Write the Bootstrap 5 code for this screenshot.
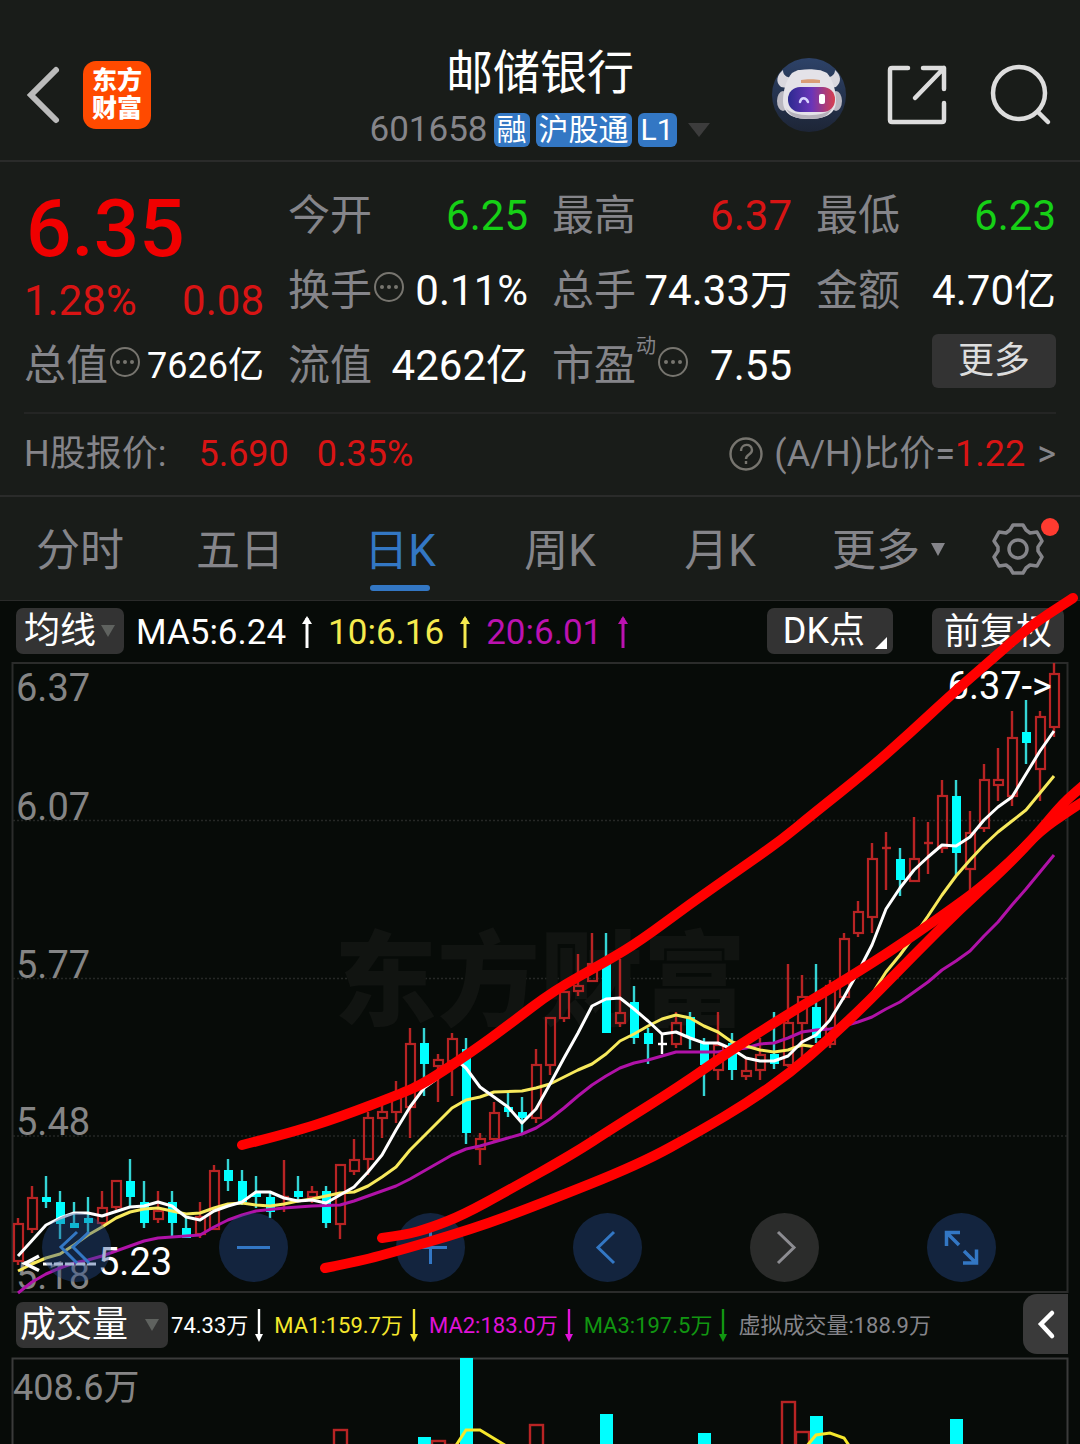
<!DOCTYPE html>
<html lang="zh-CN">
<head>
<meta charset="utf-8">
<meta name="viewport" content="width=device-width, initial-scale=1">
<title>邮储银行 601658</title>
<link href="https://cdn.jsdelivr.net/npm/bootstrap@5.3.0/dist/css/bootstrap.min.css" rel="stylesheet">
<style>
  :root { --panel:#191c19; --ink:#070b08; --mute:#85858a; --up:#d81414; --down:#16d016; --accent:#3377c4; --chip:#333333; --ma10:#f5ea4e; --ma20:#bb12b0; }
  body { background:var(--ink); color:#fff; font-family:Roboto,"Noto Sans CJK SC",sans-serif; overflow-x:hidden; }
  a { color:inherit; text-decoration:none; }
  button { border:0; background:none; color:inherit; padding:0; }
  svg { display:block; overflow:visible; }
  .panel { background:var(--panel); }
  .rule-b { border-bottom:2px solid #2a2b2a; }
  .mute { color:var(--mute); } .up { color:var(--up); } .down { color:var(--down); }
  .c10 { color:var(--ma10); } .c20 { color:var(--ma20); }

  .topbar { display:grid; grid-template-columns:1fr auto 1fr; padding:28px 28px 0 28px; height:162px; }
  .topbar-side { padding-top:28px; }
  .brand { width:68px; height:68px; margin:5px 0 0 19px; border-radius:13px; background:#ff4a00; font-size:25px; line-height:28px; font-weight:900; text-align:center; padding-top:6px; }
  .stock-name { font-size:47px; line-height:60px; font-weight:400; margin:15px 0 0; }
  .code-line { font-size:35px; line-height:40px; margin-top:7px; gap:6px; }
  .tag { background:var(--accent); border-radius:6px; font-size:30px; line-height:34px; padding:0 3px; }

  .quote { padding:16px 24px 0; }
  .quote-grid { display:grid; grid-template-columns:repeat(4,1fr); grid-auto-rows:75px; column-gap:24px; padding-bottom:9px; border-bottom:2px solid #242524; }
  .price-cell { grid-row:span 2; }
  .price { font-size:80px; line-height:90px; font-weight:500; color:#f00000; padding:6px 0 2px 2px; }
  .kv { display:flex; align-items:center; justify-content:space-between; font-size:42px; line-height:50px; white-space:nowrap; }
  .kv .small-num { font-size:36px; }
  .dyn { font-size:20px; line-height:20px; align-self:flex-start; margin-top:8px; }
  .more-btn { background:var(--chip); color:#ddd; border-radius:6px; font-size:36px; line-height:54px; width:124px; margin-top:6px; }
  .h-line { font-size:36px; line-height:40px; padding:20px 0 21px; }

  .period { display:grid; grid-template-columns:repeat(5,160fr) 178fr 102fr; height:103px; font-size:44px; padding-top:23px; }
  .period a, .period button { text-align:center; color:var(--mute); position:relative; height:71px; line-height:62px; }
  .period .current { color:var(--accent); }
  .period .current::after { content:""; position:absolute; left:50%; bottom:0; width:60px; height:6px; margin-left:-30px; border-radius:3px; background:var(--accent); }
  .caret { margin:25px 0 0 10px; }
  .gear { padding-right:22px; }

  .board { border-top:1px solid #2a2b2a; }
  .chip-btn { background:var(--chip); border-radius:7px; font-size:36px; line-height:48px; height:46px; white-space:nowrap; }
  .ma-bar { height:61px; padding:7px 16px 0; font-size:35px; line-height:49px; }
  .trend { margin:6px 10px 0; }
  .chip-gap { margin-left:39px; }
  .vol-bar { height:63px; padding:0 12px 0 16px; font-size:22px; line-height:46px; }
  .vol-text { margin:9px 0 0 3px; }
  .side-btn { background:#3a3a3a; border-radius:14px 0 0 14px; width:45px; height:60px; }
  .pane svg { width:100%; height:auto; }
  .tools { position:absolute; left:42px; right:84px; bottom:12px; }
  .tools button { width:69px; height:69px; border-radius:50%; background:rgba(37,76,146,.4); color:var(--accent); }
  .tools .off { background:#2b2c2b; color:#8d8d92; }
  .ink-layer { position:absolute; left:0; top:0; width:100%; height:auto; pointer-events:none; z-index:3; }
</style>
</head>
<body>
<header class="panel rule-b topbar">
  <div class="topbar-side d-flex align-items-start">
    <a href="#" aria-label="返回" class="pt-2"><svg width="36" height="62" viewBox="2 0 36 62"><path d="M30 6 5 31 30 56" fill="none" stroke="#bbb" stroke-width="6" stroke-linecap="round"/></svg></a>
    <div class="brand">东方<br>财富</div>
  </div>
  <div class="text-center">
    <h1 class="stock-name">邮储银行</h1>
    <div class="code-line d-flex align-items-center justify-content-center">
      <span class="mute">601658</span><span class="tag">融</span><span class="tag">沪股通</span><span class="tag">L1</span>
      <svg class="ms-1" width="24" height="16" viewBox="0 0 24 16"><path d="M1 1h22L12 15z" fill="#3c3c3c"/></svg>
    </div>
  </div>
  <div class="topbar-side d-flex align-items-start justify-content-end">
    <button aria-label="智能助手"><svg width="76" height="76" viewBox="1 0 76 76">
      <defs><linearGradient id="visor"><stop offset="0" stop-color="#2c2a90"/><stop offset=".5" stop-color="#6a35b8"/><stop offset="1" stop-color="#d8404e"/></linearGradient>
      <linearGradient id="sky" x2="0" y2="1"><stop offset="0" stop-color="#2d4268"/><stop offset="1" stop-color="#1d2536"/></linearGradient></defs>
      <circle cx="38" cy="39" r="37" fill="url(#sky)"/>
      <path d="M12 14c-6 5-8 12-2 17l12 2 3-12c-8 2-13-1-13-7zM64 14c6 5 7 12 1 17l-11 2-4-12c8 2 14-1 14-7z" fill="#d9d7de"/>
      <ellipse cx="12" cy="45" rx="6" ry="10" fill="#b9b7c0"/><ellipse cx="65" cy="45" rx="6" ry="10" fill="#b9b7c0"/>
      <path d="M21 17c3-1 4-3 8-3 6-1 13-1 18 0 4 0 6 2 9 3 6 7 9 18 9 28 0 13-11 18-27 18S12 58 12 45c0-10 3-21 9-28z" fill="#e4e2e8"/>
      <path d="M15 52c5 9 39 10 46 0-3 8-10 11-23 11s-20-3-23-11z" fill="#b5b1bb"/>
      <rect x="17" y="31" width="47" height="25" rx="12" fill="url(#visor)"/>
      <path d="M30 24c5-1 14-1 19 0v3H30z" fill="#d99d75"/>
      <path d="M29 46c1-5 6-5 8 0" fill="none" stroke="#d8d4ff" stroke-width="2.5" stroke-linecap="round"/><rect x="48" y="38" width="6" height="10" rx="2" fill="#fff"/>
    </svg></button>
    <button aria-label="分享" class="ms-4"><svg class="mt-2 ms-3" width="60" height="60" viewBox="1 -1 60 60" fill="none" stroke="#ddd" stroke-width="4.5" stroke-linecap="round" stroke-linejoin="round"><path d="M21 3H5q-2 0-2 2v50q0 2 2 2h50q2 0 2-2V38M36 3h21v21M57 3 28 33"/></svg></button>
    <button aria-label="搜索" class="ms-4"><svg class="mt-2 ms-3" width="64" height="62" viewBox="0 0 64 62" fill="none" stroke="#ddd" stroke-width="4.5" stroke-linecap="round"><circle cx="31" cy="29" r="26"/><path d="m50 48 10 10"/></svg></button>
  </div>
</header>

<section class="panel quote rule-b">
  <div class="quote-grid">
    <div class="price-cell"><div class="price">6.35</div><div class="kv up"><span>1.28%</span><span>0.08</span></div></div>
    <div class="kv"><span class="mute">今开</span><span class="down">6.25</span></div>
    <div class="kv"><span class="mute">最高</span><span class="up">6.37</span></div>
    <div class="kv"><span class="mute">最低</span><span class="down">6.23</span></div>
    <div class="kv"><span class="mute d-flex align-items-center">换手<svg width="32" height="42" viewBox="0 0 32 42"><g fill="#77756f"><circle cx="17" cy="17" r="14" fill="none" stroke="#77756f" stroke-width="2"/><circle cx="10" cy="17" r="2"/><circle cx="17" cy="17" r="2"/><circle cx="24" cy="17" r="2"/></g></svg></span><span>0.11%</span></div>
    <div class="kv"><span class="mute">总手</span><span>74.33万</span></div>
    <div class="kv"><span class="mute">金额</span><span>4.70亿</span></div>
    <div class="kv"><span class="mute d-flex align-items-center">总值<svg width="32" height="42" viewBox="0 0 32 42"><g fill="#77756f"><circle cx="17" cy="17" r="14" fill="none" stroke="#77756f" stroke-width="2"/><circle cx="10" cy="17" r="2"/><circle cx="17" cy="17" r="2"/><circle cx="24" cy="17" r="2"/></g></svg></span><span class="small-num">7626亿</span></div>
    <div class="kv"><span class="mute">流值</span><span>4262亿</span></div>
    <div class="kv"><span class="mute d-flex align-items-center align-self-stretch">市盈<span class="dyn">动</span><svg width="32" height="42" viewBox="0 0 32 42"><g fill="#77756f"><circle cx="17" cy="17" r="14" fill="none" stroke="#77756f" stroke-width="2"/><circle cx="10" cy="17" r="2"/><circle cx="17" cy="17" r="2"/><circle cx="24" cy="17" r="2"/></g></svg></span><span>7.55</span></div>
    <div class="d-flex justify-content-end align-items-start"><button class="more-btn">更多</button></div>
  </div>
  <div class="h-line d-flex justify-content-between">
    <div class="d-flex"><span class="mute">H股报价:</span><span class="up ps-4 ms-2">5.690</span><span class="up ps-4 ms-1">0.35%</span></div>
    <a href="#" class="mute d-flex align-items-center"><svg class="me-2" width="40" height="36" viewBox="0 0 40 36" fill="none" stroke="#77756f" stroke-width="2.4"><circle cx="20" cy="18" r="15.5"/><path d="M15 15c0-8 11-8 11-1 0 5-6 4-6 9M20 25v3"/></svg>(A/H)比价=<span class="up">1.22</span><span class="ps-2 ms-1">&gt;</span></a>
  </div>
</section>

<nav class="panel period">
  <a href="#">分时</a><a href="#">五日</a><a href="#" class="current">日K</a><a href="#">周K</a><a href="#">月K</a>
  <button class="d-flex align-items-start justify-content-center">更多<svg class="caret" width="16" height="14" viewBox="0 2 16 14"><path d="M1 0h14L8 13z" fill="#85858a"/></svg></button>
  <button aria-label="设置" class="gear d-flex justify-content-center"><svg width="56" height="58" viewBox="-28 -29 56 58" fill="none" stroke="#85858a" stroke-width="3.5" stroke-linejoin="round"><path d="M-8-19-5-24H5L8-19 12-16 19-17 24-8 20-2V2L24 8 19 17 12 16 8 19 5 24H-5L-8 19-12 16-19 17-24 8-20 2V-2L-24-8-19-17-12-16z"/><circle r="9"/><circle cx="32" cy="-22" r="9" fill="#ff3b30" stroke="none"/></svg></button>
</nav>

<main class="board position-relative">
  <div class="ma-bar d-flex align-items-start">
    <button class="chip-btn d-flex align-items-center ps-2 pe-2">均线<svg class="ms-1" width="16" height="14" viewBox="0 0 16 14"><path d="M1 1h14L8 13z" fill="#5f625f"/></svg></button>
    <span class="ms-2 ps-1">MA5:6.24</span><svg class="trend" width="22" height="36" viewBox="0 0 22 36"><path d="M11 34V4" stroke="currentColor" stroke-width="3"/><path d="M6 10 11 2l5 8z" fill="currentColor"/></svg>
    <span class="c10">10:6.16</span><svg class="trend c10" width="22" height="36" viewBox="0 0 22 36"><path d="M11 34V4" stroke="currentColor" stroke-width="3"/><path d="M6 10 11 2l5 8z" fill="currentColor"/></svg>
    <span class="c20">20:6.01</span><svg class="trend c20" width="22" height="36" viewBox="0 0 22 36"><path d="M11 34V4" stroke="currentColor" stroke-width="3"/><path d="M6 10 11 2l5 8z" fill="currentColor"/></svg>
    <button class="chip-btn d-flex align-items-center ms-auto ps-3 pe-1">DK点<svg class="ms-2 align-self-end mb-1" width="16" height="14" viewBox="0 0 16 14"><path d="M14 1v12H2z" fill="#fff"/></svg></button>
    <button class="chip-btn chip-gap px-2"><span class="px-1">前复权</span></button>
  </div>

  <div class="pane position-relative">
    <svg id="kline" viewBox="0 662 1080 632" role="img" aria-label="日K线图">
      <rect x="12.5" y="663" width="1055" height="629" fill="none" stroke="#2b2c2b" stroke-width="2"/>
      <path d="M13 820.5H1067M13 978.5H1067M13 1136H1067" stroke="#262826" stroke-width="1.5" stroke-dasharray="2 2"/>
      <text x="540" y="1018" text-anchor="middle" font-size="103" font-weight="900" fill="#111411">东方财富</text>
      <g font-size="38" fill="#858585"><text x="16" y="701">6.37</text><text x="16" y="820">6.07</text><text x="16" y="978">5.77</text><text x="16" y="1135">5.48</text><text x="16" y="1289">5.18</text></g>
      <g id="candles"></g>
      <g fill="none" stroke-width="3" stroke-linejoin="round">
        <polyline stroke="#b012a8" points="18,1293 32,1282 46,1274 60,1268 74,1263 88,1260 102,1256 116,1251 130,1246 144,1241 158,1238 172,1237 200,1235 214,1227 228,1220 242,1215 256,1211 284,1208 312,1206 340,1205 354,1201 368,1196 396,1186 410,1179 438,1163 452,1155 466,1149 480,1146 494,1142 522,1134 536,1128 550,1119 564,1108 578,1096 592,1085 606,1076 620,1068 634,1063 648,1060 676,1052 718,1052 746,1048 760,1044 774,1043 788,1038 802,1032 816,1030 830,1029 844,1026 858,1022 872,1017 886,1009 900,1002 914,992 928,982 942,970 956,961 970,951 984,936 998,922 1012,905 1026,889 1040,872 1054,855"/>
        <polyline stroke="#f7e95c" points="18,1271 32,1264 46,1258 60,1254 74,1245 88,1235 102,1227 116,1218 130,1212 144,1209 158,1208 172,1211 186,1214 200,1213 214,1208 228,1204 242,1203 256,1205 270,1206 284,1204 298,1201 312,1199 326,1196 340,1193 354,1192 368,1186 382,1177 396,1167 410,1150 424,1136 438,1122 452,1108 466,1100 480,1097 494,1092 522,1091 536,1088 550,1084 564,1077 578,1070 592,1064 606,1054 620,1041 634,1034 648,1026 662,1019 676,1015 690,1018 704,1026 718,1032 732,1042 746,1046 760,1050 774,1052 788,1050 802,1045 816,1047 830,1040 844,1026 858,1008 872,994 886,972 900,955 914,936 928,916 942,895 956,876 970,860 984,845 998,832 1012,821 1026,810 1040,793 1054,776"/>
        <polyline stroke="#fff" points="18,1256 46,1225 60,1218 74,1213 88,1213 102,1216 130,1207 144,1206 158,1202 172,1206 186,1217 200,1220 214,1211 228,1206 242,1202 256,1192 270,1192 284,1198 298,1201 312,1200 326,1203 340,1195 354,1187 368,1172 382,1155 396,1130 410,1107 424,1088 438,1078 452,1064 460,1063 466,1068 480,1087 494,1097 508,1107 522,1123 536,1109 550,1084 564,1058 578,1033 592,1006 606,999 620,998 634,1009 648,1021 662,1034 676,1032 690,1038 704,1043 718,1043 732,1049 746,1058 760,1061 774,1061 788,1056 802,1042 816,1035 830,1020 844,997 858,972 872,945 886,909 900,888 914,870 928,857 942,845 956,846 970,837 984,820 998,807 1012,797 1026,774 1040,751 1054,731"/>
      </g>
      <g fill="#fff" font-size="38"><text x="1052" y="699" text-anchor="end">6.37-&gt;</text><text x="98" y="1275">5.23</text></g>
      <path d="M39 1256 25 1263.5l14 7" fill="none" stroke="#fff" stroke-width="3.5"/><path d="M43 1264H96" stroke="#fff" stroke-width="3" stroke-dasharray="9 2"/>
    </svg>
    <div class="tools d-flex justify-content-between">
      <button aria-label="最早"><svg viewBox="0 0 69 69" fill="none" stroke="currentColor" stroke-width="3"><path d="M35 19 19 34l16 16M47 19 31 34l16 16"/></svg></button>
      <button aria-label="缩小"><svg viewBox="0 0 69 69" fill="none" stroke="currentColor" stroke-width="3"><path d="M18 34.5h33"/></svg></button>
      <button aria-label="放大"><svg viewBox="0 0 69 69" fill="none" stroke="currentColor" stroke-width="3"><path d="M18 34.5h33M34.5 18v33"/></svg></button>
      <button aria-label="左移"><svg viewBox="0 0 69 69" fill="none" stroke="currentColor" stroke-width="3"><path d="M41 19 25 34.5 41 50"/></svg></button>
      <button aria-label="右移" class="off"><svg viewBox="0 0 69 69" fill="none" stroke="currentColor" stroke-width="3"><path d="M28 19 44 34.5 28 50"/></svg></button>
      <button aria-label="全屏"><svg viewBox="0 0 69 69" fill="none" stroke="currentColor" stroke-width="3.5"><path d="M33 19.5H19.5V33M20 20l12 12M36 50H49.5V36.5M49 50 37 38"/></svg></button>
    </div>
  </div>

  <div class="vol-bar d-flex align-items-start">
    <button class="chip-btn d-flex align-items-center ps-1 pe-2 mt-2">成交量<svg class="ms-3" width="16" height="14" viewBox="0 0 16 14"><path d="M1 1h14L8 13z" fill="#5f625f"/></svg></button>
    <div class="vol-text d-flex align-items-center" id="volText"></div>
    <button class="side-btn ms-auto d-flex align-items-center justify-content-center" aria-label="展开"><svg width="20" height="32" viewBox="0 0 20 32"><path d="M16 5 5 16l11 12" fill="none" stroke="#fff" stroke-width="4.5" stroke-linecap="round"/></svg></button>
  </div>

  <div class="pane overflow-hidden">
    <svg viewBox="0 1356 1080 88" role="img" aria-label="成交量图" class="overflow-hidden">
      <path d="M12.5 1444V1357.5H1067.5V1444" fill="none" stroke="#3a3b3a" stroke-width="2"/>
      <text x="13" y="1399" font-size="36" fill="#858585">408.6万</text>
      <g id="volumes"></g>
      <path d="M455 1446 466 1429H480L508 1446M806 1446 816 1434 830 1432 844 1437 850 1446" fill="none" stroke="#f5e72c" stroke-width="3"/>
    </svg>
  </div>

  <svg class="ink-layer" viewBox="0 600 1080 844" fill="none" stroke="#f00" stroke-width="10" stroke-linecap="round" stroke-linejoin="round" aria-hidden="true" id="ink"></svg>
</main>

<script src="https://cdn.jsdelivr.net/npm/bootstrap@5.3.0/dist/js/bootstrap.bundle.min.js"></script>
<script>
  // kind, body top, body bottom, high, low (r = rising, c = falling, x = unchanged, w = flat day)
  const days = `r 1223 1261 1218 1265|r 1197 1229 1186 1233|c 1197 1202 1176 1208|c 1202 1224 1191 1239|c 1223 1228 1202 1228|c 1218 1223 1197 1233|r 1207 1223 1191 1228|r 1180 1207 1180 1212|c 1181 1197 1159 1208|c 1202 1223 1181 1228|r 1210 1219 1191 1223|c 1202 1223 1191 1237|c 1228 1238 1218 1238|r 1216 1234 1202 1238|r 1170 1229 1165 1229|c 1170 1181 1159 1191|c 1181 1202 1170 1205|c 1193 1197 1176 1208|c 1197 1212 1191 1218|x 1197 1198 1160 1212|c 1191 1197 1176 1200|r 1191 1197 1186 1203|c 1191 1223 1186 1228|r 1164 1224 1164 1239|r 1159 1171 1139 1175|r 1117 1159 1112 1175|r 1111 1118 1105 1138|r 1097 1112 1081 1123|r 1043 1107 1028 1138|c 1043 1064 1028 1096|r 1059 1066 1054 1102|r 1038 1061 1033 1096|c 1049 1133 1038 1144|r 1138 1149 1133 1165|r 1112 1139 1102 1142|c 1107 1112 1092 1117|c 1112 1118 1097 1133|r 1064 1118 1049 1123|r 1017 1065 1017 1075|r 991 1018 991 1022|r 985 991 954 996|r 963 981 933 981|c 960 1033 933 1033|r 1012 1023 959 1027|c 1002 1038 986 1044|c 1033 1044 1028 1064|w 1044 1045 1033 1054|r 1022 1044 1012 1048|c 1017 1038 1012 1049|c 1043 1065 1038 1096|r 1044 1070 1012 1080|c 1043 1070 1033 1080|r 1070 1076 1059 1080|r 1054 1070 1038 1080|c 1054 1064 1012 1069|r 1022 1065 964 1067|r 996 1023 975 1057|c 1007 1038 964 1043|r 985 1044 980 1048|r 938 997 933 1000|r 911 933 901 937|r 858 917 843 933|x 848 849 832 890|c 859 880 848 896|r 858 881 817 881|x 843 844 822 874|r 795 848 780 853|c 796 853 780 875|r 832 869 811 890|r 779 828 764 832|r 779 785 748 801|r 737 796 711 806|c 732 743 700 764|r 716 769 711 801|r 673 727 663 737`;
  const xAt = i => 18 + 14 * i;
  document.getElementById('candles').innerHTML = days.split('|').map((d, i) => {
    const [k, ...n] = d.split(' '), [t, b, h, l] = n.map(Number), x = xAt(i);
    const col = { r: '#b82424', c: '#35d5d5', x: '#b82424', w: '#fff' }[k];
    const wick = (y1, y2) => `<path d="M${x} ${y1}V${y2}" stroke="${col}" stroke-width="2.4"/>`;
    if (k === 'c') return wick(h, l) + `<rect x="${x - 4}" y="${t}" width="9" height="${b - t}" fill="#00ffff"/>`;
    if (k === 'r') return wick(h, t) + wick(b, l) + `<rect x="${x - 4}" y="${t + 1}" width="9" height="${Math.max(b - t - 1, 3)}" fill="none" stroke="${col}" stroke-width="2.2"/>`;
    return wick(h, l) + `<path d="M${x - 4} ${t}H${x + 5}" stroke="${col}" stroke-width="2.4"/>`;
  }).join('');

  const vols = [[340,1428,'r'],[424,1436,'c'],[438,1439,'r'],[452,1443,'r'],[466,1357,'c'],[536,1423,'r'],[606,1413,'c'],[704,1432,'c'],[788,1400,'r'],[802,1430,'r'],[816,1415,'c'],[956,1418,'c']];
  document.getElementById('volumes').innerHTML = vols.map(([x, y, k]) => k === 'c'
    ? `<rect x="${x - 6}" y="${y}" width="13" height="90" fill="#00ffff"/>`
    : `<rect x="${x - 6}" y="${y + 1}" width="13" height="90" fill="none" stroke="#b82424" stroke-width="2.4"/>`).join('');

  const arrow = c => `<svg class="ms-1 me-2" width="14" height="36" viewBox="0 0 14 36"><path d="M7 1V30" stroke="${c}" stroke-width="2.4"/><path d="M3 26h8L7 34z" fill="${c}"/></svg>`;
  document.getElementById('volText').innerHTML = [['74.33万','#ffffff'],['MA1:159.7万','#f5e72c'],['MA2:183.0万','#e012d8'],['MA3:197.5万','#119611']]
    .map(([t, c]) => `<span style="color:${c}">${t}</span>${arrow(c)}`).join('') + '<span class="mute">虚拟成交量:188.9万</span>';

  // hand-drawn trend lines, smoothed through their midpoints
  const strokes = [
    [242,1144,290,1132,340,1116,400,1093,425,1082,473,1050,510,1023,553,990,607,960,640,940,690,903,740,868,780,840,813,813,867,770,910,732,953,692,990,660,1030,625,1067,601,1073,597],
    [382,1237,405,1234,430,1227,463,1214,507,1190,573,1153,613,1127,680,1085,730,1050,780,1018,863,968,913,935,957,904,980,887,1013,858,1040,830,1067,811,1084,800],
    [325,1267,350,1262,380,1255,473,1228,540,1203,640,1163,700,1130,747,1102,790,1072,830,1037,867,1002,913,955,960,908,1007,865,1040,830,1063,802,1084,784]];
  document.getElementById('ink').innerHTML = strokes.map(s => {
    let d = `M${s[0]} ${s[1]}`;
    for (let i = 2; i < s.length - 2; i += 2) d += `Q${s[i]} ${s[i + 1]} ${(s[i] + s[i + 2]) / 2} ${(s[i + 1] + s[i + 3]) / 2}`;
    return `<path d="${d}L${s[s.length - 2]} ${s[s.length - 1]}"/>`;
  }).join('');
</script>
</body>
</html>
